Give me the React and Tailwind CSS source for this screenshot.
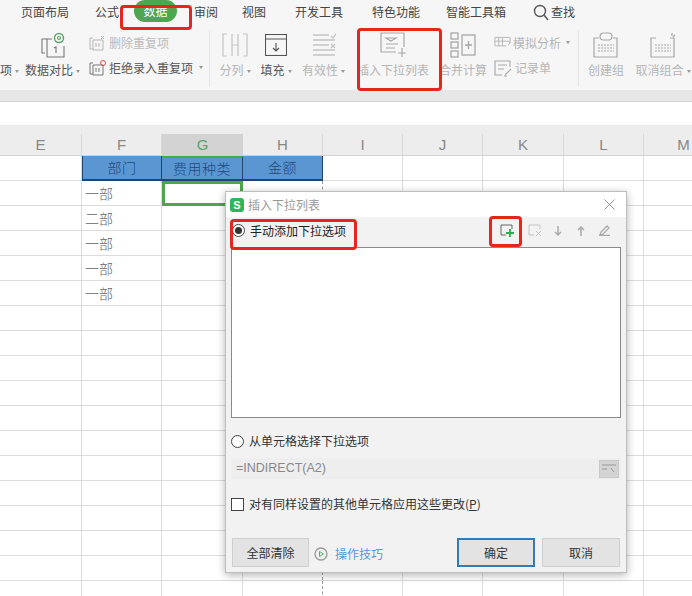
import React from 'react'

const font = { fontFamily: '"Noto Sans CJK SC", "Liberation Sans", sans-serif' }

const tabs = [
  ['页面布局', 'ml-[21px]'],
  ['公式', 'ml-[26px]'],
]
const tabsAfter = [
  ['审阅', 'ml-[17px]'],
  ['视图', 'ml-[24px]'],
  ['开发工具', 'ml-[29px]'],
  ['特色功能', 'ml-[29px]'],
  ['智能工具箱', 'ml-[26px]'],
]

const Arrow = () => <span className="inline-block ml-[3px] mb-[2px] w-0 h-0 border-x-[2.5px] border-x-transparent border-t-[3px] border-t-[#999]" />

const Big = ({ w, label, arrow, dim, children }) => (
  <div className={`${w} shrink-0 flex flex-col items-center`}>
    <div className="h-[28px] flex items-center justify-center">{children}</div>
    <div className={`mt-[3px] text-[12px] leading-[16px] whitespace-nowrap ${dim ? 'text-[#b5b5b5]' : 'text-[#555]'}`}>
      {label}
      {arrow ? <Arrow /> : null}
    </div>
  </div>
)

const IconCompare = () => (
  <svg width="26" height="28" viewBox="0 0 26 28" fill="none" stroke="#777" strokeWidth="1.1">
    <path d="M7 8H2v14h3" />
    <path d="M12 8h-5v18h17V15" />
    <circle cx="19" cy="7" r="4.5" stroke="#5aa469" strokeWidth="1.4" />
    <circle cx="19" cy="7" r="1.5" stroke="#5aa469" />
    <path d="M14 17l2-1v6" />
  </svg>
)
const IconSplit = () => (
  <svg width="26" height="24" viewBox="0 0 26 24" fill="none" stroke="#c4c4c4" strokeWidth="1.2">
    <path d="M5 1H1v22h4M21 1h4v22h-4M10 1v22M16 1v22M10 12h6" />
  </svg>
)
const IconFill = () => (
  <svg width="22" height="22" viewBox="0 0 22 22" fill="none" stroke="#555" strokeWidth="1.1">
    <rect x="0.5" y="0.5" width="21" height="21" />
    <path d="M1 5h20M11 9v8M8 14l3 3 3-3" />
  </svg>
)
const IconValid = () => (
  <svg width="24" height="24" viewBox="0 0 24 24" fill="none" stroke="#c4c4c4" strokeWidth="1.3">
    <path d="M1 2h16M1 7h22M1 12h16M1 17h22M1 22h22M19 3l2 2 3-4M19 11l4 4M23 11l-4 4" />
  </svg>
)
const IconDrop = () => (
  <svg width="26" height="26" viewBox="0 0 26 26" fill="none" stroke="#a8a8a8" strokeWidth="1.2">
    <path d="M16 20H1V1h23v14" />
    <path d="M6 6h10l-5 3zM6 12h12M6 16h9M22 16v9M18 21h8" />
  </svg>
)
const IconMerge = () => (
  <svg width="26" height="26" viewBox="0 0 26 26" fill="none" stroke="#a8a8a8" strokeWidth="1.3">
    <rect x="1" y="1" width="7" height="6" />
    <rect x="1" y="10" width="7" height="6" />
    <rect x="1" y="19" width="7" height="6" />
    <rect x="12" y="3" width="13" height="20" />
    <path d="M18.500 9v8M15 13h7" />
  </svg>
)
const IconGroup = ({ ungroup }) => (
  <svg width="26" height="26" viewBox="0 0 26 26" fill="none" stroke="#a8a8a8" strokeWidth="1.2">
    <path d="M6 6H1v19h23V6h-4" />
    <path d="M5 13h16M5 16h16M5 19h16" strokeDasharray="2 1" />
    {ungroup ? <path d="M22 1v3M25 3l-2 2" /> : <rect x="7" y="1" width="12" height="7" rx="3.500" />}
  </svg>
)
const SmallIcon = ({ stroke = '#b5b5b5', dot }) => (
  <svg width="17" height="16" viewBox="0 0 17 16" fill="none" stroke={stroke} strokeWidth="1">
    <path d="M4 3H1v11h3M4 5h10v10H4z" />
    <path d="M7 8v4M10 8v4" />
    {dot ? <circle cx="14" cy="3" r="2.500" stroke="#d9534f" /> : <path d="M12 1l3 3M15 1l-3 3" />}
  </svg>
)
const IconSim = () => (
  <svg width="18" height="15" viewBox="0 0 18 15" fill="none" stroke="#b5b5b5" strokeWidth="1">
    <path d="M13 10H1V1h16v6M1 5h12M5 1v9M9 1v9M15 9a2 2 0 1 0-2-3" />
  </svg>
)
const IconForm = () => (
  <svg width="19" height="17" viewBox="0 0 19 17" fill="none" stroke="#a8a8a8" strokeWidth="1.1">
    <path d="M8 15H1V1h15v6M4 5h9M4 9h6M11 15l6-6M10 16h3" />
  </svg>
)
const Search = () => (
  <svg width="16" height="17" viewBox="0 0 16 17" fill="none" stroke="#555" strokeWidth="1.4">
    <circle cx="7" cy="7" r="5.500" />
    <path d="M11 11l4 5" />
  </svg>
)

const Ribbon = () => (
  <div className="h-[90px] bg-[#f6f6f6] overflow-hidden">
    <div className="h-[24px] flex items-center text-[12px] text-[#444]">
      {tabs.map(([t, m]) => (
        <span key={t} className={m}>{t}</span>
      ))}
      <span className="ml-[15px] w-[43px] h-[22px] -mt-[2px] rounded-[11px] bg-[#4fa650] text-white text-center leading-[22px]">数据</span>
      {tabsAfter.map(([t, m]) => (
        <span key={t} className={m}>{t}</span>
      ))}
      <span className="ml-[27px] flex items-center gap-[2px]">
        <Search />
        查找
      </span>
    </div>
    <div className="flex pt-[7px] h-[66px]">
      <div className="w-[24px] shrink-0 pt-[31px] text-[12px] leading-[16px] text-[#555]">项<Arrow /></div>
      <Big w="w-[57px]" label="数据对比" arrow><IconCompare /></Big>
      <div className="ml-[8px] w-[120px] shrink-0 flex flex-col gap-[7px] pt-[3px]">
        <div className="flex items-center gap-[3px] h-[18px] text-[12px] text-[#bbb]"><SmallIcon />删除重复项</div>
        <div className="flex items-center gap-[3px] h-[18px] text-[12px] text-[#555] whitespace-nowrap"><SmallIcon stroke="#777" dot />拒绝录入重复项<Arrow /></div>
      </div>
      <div className="w-px h-[56px] bg-[#e4e4e4] shrink-0" />
      <div className="ml-[9px] flex gap-[9px] shrink-0">
        <Big w="w-[32px]" label="分列" arrow dim><IconSplit /></Big>
        <Big w="w-[32px]" label="填充" arrow><IconFill /></Big>
        <Big w="w-[45px]" label="有效性" arrow dim><IconValid /></Big>
      </div>
      <div className="ml-[11px] shrink-0">
        <Big w="w-[72px]" label="插入下拉列表" dim><IconDrop /></Big>
      </div>
      <div className="ml-[11px] shrink-0">
        <Big w="w-[46px]" label="合并计算" dim><IconMerge /></Big>
      </div>
      <div className="ml-[8px] w-[76px] shrink-0 flex flex-col gap-[7px] pt-[3px] text-[12px] text-[#b5b5b5]">
        <div className="flex items-center gap-[2px] h-[18px] whitespace-nowrap"><IconSim />模拟分析<Arrow /></div>
        <div className="flex items-center gap-[2px] h-[18px] whitespace-nowrap"><IconForm />记录单</div>
      </div>
      <div className="ml-[8px] w-px h-[56px] bg-[#e4e4e4] shrink-0" />
      <div className="ml-[9px] flex gap-[10px] shrink-0">
        <Big w="w-[36px]" label="创建组" dim><IconGroup /></Big>
        <Big w="w-[58px]" label="取消组合" arrow dim><IconGroup ungroup /></Big>
      </div>
    </div>
  </div>
)

const letters = ['E', 'F', 'G', 'H', 'I', 'J', 'K', 'L', 'M']
const gridCols = 'grid grid-cols-[82px_80px_81px_80px_80px_80px_81px_80px_80px]'
const depts = ['一部', '二部', '一部', '一部', '一部']

const cellBorder = (l, r) => {
  if (l === 'G' && r === 0) return 'border-[3px] border-[#4ea64b]'
  if (l === 'H') return 'border-r border-dashed border-[#999]'
  return 'border-r border-[#dcdcdc]'
}

const Sheet = () => (
  <div>
    <div className={`${gridCols} h-[31px] bg-[#ededed] border-b border-[#d2d2d2]`}>
      {letters.map((l) => (
        <div key={l} className="pt-[9px] h-[31px]">
          <div className={`h-[21px] leading-[21px] text-center text-[15px] ${l === 'G' ? 'bg-[#d3d3d3] text-[#5aa469]' : 'text-[#888] border-r border-[#d8d8d8]'}`} style={{ fontFamily: '"Liberation Sans", sans-serif' }}>
            {l}
          </div>
        </div>
      ))}
    </div>
    <div className={`${gridCols} h-[25px] border-b border-[#dcdcdc]`}>
      {letters.map((l, i) => {
        const text = { F: '部门', G: '费用种类', H: '金额' }[l]
        if (text) {
          return (
            <div key={l} className={`bg-[#5b96d3] border-b-2 border-r border-[#24456b] ${l === 'F' ? 'border-l' : ''} ${l === 'G' ? 'border-t-2 border-t-[#4ea64b] leading-[21px]' : 'leading-[23px]'} text-center text-[#1d4a7a] text-[14px] font-light tracking-[0.5px]`}>
              {text}
            </div>
          )
        }
        return <div key={i} className="border-r border-[#dcdcdc]" />
      })}
    </div>
    {Array.from({ length: 17 }).map((_, r) => (
      <div key={r} className={`${gridCols} h-[25px] border-b border-[#dcdcdc]`}>
        {letters.map((l) => (
          <div key={l} className={`${cellBorder(l, r)} text-[14px] leading-[25px] text-[#666] font-light pl-[3px]`}>
            {l === 'F' && depts[r] ? depts[r] : null}
          </div>
        ))}
      </div>
    ))}
  </div>
)

const Radio = ({ checked }) => (
  <span className="w-[13px] h-[13px] shrink-0 rounded-full border border-[#444] bg-white flex items-center justify-center">
    {checked ? <span className="w-[7px] h-[7px] rounded-full bg-[#333]" /> : null}
  </span>
)

const Tool = ({ children }) => <span className="w-[22px] flex justify-center">{children}</span>

const Dialog = () => (
  <div className="absolute left-[225px] top-[191px] w-[402px] h-[382px] bg-[#f2f2f2] border border-[#bdbdbd] shadow-[0_2px_8px_rgba(0,0,0,0.3)] flex flex-col">
    <div className="h-[25px] shrink-0 bg-white flex items-center pl-[4px] pr-[11px]">
      <span className="w-[14px] h-[14px] rounded-[3px] bg-[#2fb65a] text-white text-[11px] leading-[14px] text-center font-bold" style={{ fontFamily: '"Liberation Sans", sans-serif' }}>S</span>
      <span className="ml-[4px] text-[12px] text-[#999]">插入下拉列表</span>
      <svg className="ml-auto" width="11" height="11" viewBox="0 0 11 11" stroke="#888" strokeWidth="0.9">
        <path d="M0.500 0.500l10 10M10.500 0.500l-10 10" />
      </svg>
    </div>
    <div className="h-[27px] mb-[3px] shrink-0 flex items-center pl-[6px] pr-[11px]">
      <Radio checked />
      <span className="ml-[5px] text-[12px] text-[#222]">手动添加下拉选项</span>
      <div className="ml-auto flex items-center gap-[1px]">
        <span className="mr-[5px]">
          <Tool>
            <svg width="14" height="13" viewBox="0 0 14 13" fill="none" strokeWidth="1">
              <path d="M6 11H1V1h11v4" stroke="#666" />
              <path d="M10 5v8M6 9h8" stroke="#22b24c" strokeWidth="1.800" />
            </svg>
          </Tool>
        </span>
        <Tool>
          <svg width="14" height="13" viewBox="0 0 14 13" fill="none" stroke="#c4c4c4">
            <path d="M6 11H1V1h11v4M8 7l5 5M13 7l-5 5" />
          </svg>
        </Tool>
        <Tool>
          <svg width="8" height="10" viewBox="0 0 8 10" fill="none" stroke="#aaa" strokeWidth="1.500">
            <path d="M4 0v9M1 6l3 3 3-3" />
          </svg>
        </Tool>
        <Tool>
          <svg width="8" height="10" viewBox="0 0 8 10" fill="none" stroke="#aaa" strokeWidth="1.500">
            <path d="M4 10V1M1 4l3-3 3 3" />
          </svg>
        </Tool>
        <Tool>
          <svg width="11" height="11" viewBox="0 0 11 11" fill="none" stroke="#aaa" strokeWidth="1.300">
            <path d="M1 10l1-3 6-6 2 2-6 6zM0 10.500h11" />
          </svg>
        </Tool>
      </div>
    </div>
    <div className="mx-[5px] h-[171px] shrink-0 bg-white border border-[#8a8a8a]" />
    <div className="mt-[15px] ml-[5px] flex items-center h-[16px] text-[12px] text-[#333]">
      <Radio />
      <span className="ml-[5px]">从单元格选择下拉选项</span>
    </div>
    <div className="mt-[9px] mx-[5px] h-[21px] bg-[#eeeeee] flex items-center pl-[5px] pr-[2px] text-[12.5px] text-[#888]" style={{ fontFamily: '"Liberation Sans", sans-serif' }}>
      =INDIRECT(A2)
      <span className="ml-auto w-[20px] h-[18px] bg-[#d4d4d4] border border-[#c8c8c8] flex items-center justify-center">
        <svg width="14" height="10" viewBox="0 0 14 10" fill="none" stroke="#999">
          <path d="M0 1h14M0 5h5M9 4l3 4" />
        </svg>
      </span>
    </div>
    <div className="mt-[17px] ml-[5px] flex items-center h-[16px] text-[12px] text-[#333]">
      <span className="w-[13px] h-[13px] bg-white border border-[#444]" />
      <span className="ml-[5px]">对有同样设置的其他单元格应用这些更改(<span className="underline">P</span>)</span>
    </div>
    <div className="mt-[26px] ml-[6px] mr-[6px] flex items-center text-[12px] text-[#333]">
      <button className="w-[77px] h-[29px] bg-[#e3e3e3] border border-[#cfcfcf]">全部清除</button>
      <svg className="ml-[5px] mt-[3px]" width="14" height="14" viewBox="0 0 14 14" fill="none">
        <circle cx="7" cy="7" r="6" stroke="#999" strokeWidth="1.300" />
        <path d="M5.500 4.500v5l4-2.500z" stroke="#4fae6a" />
      </svg>
      <span className="ml-[7px] mt-[3px] text-[#5d94dc]">操作技巧</span>
      <button className="ml-auto w-[78px] h-[29px] bg-[#e3e3e3] border-2 border-[#2f7cb8]">确定</button>
      <button className="ml-[7px] w-[78px] h-[29px] bg-[#e3e3e3] border border-[#cfcfcf]">取消</button>
    </div>
  </div>
)

const Mark = ({ className }) => <div className={`absolute border-[3px] border-[#e6251c] rounded-[4px] ${className}`} />

export default function App() {
  return (
    <div className="relative w-[692px] h-[596px] overflow-hidden bg-white" style={font}>
      <Ribbon />
      <div className="h-[12px] bg-[#e7e7e7] border-b border-[#d6d6d6]" />
      <div className="h-[23px] bg-white" />
      <Sheet />
      <Dialog />
      <Mark className="left-[120px] top-[5px] w-[72px] h-[25px]" />
      <Mark className="left-[357px] top-[28px] w-[85px] h-[63px]" />
      <Mark className="left-[230px] top-[219px] w-[127px] h-[31px]" />
      <Mark className="left-[489px] top-[216px] w-[33px] h-[31px]" />
    </div>
  )
}
